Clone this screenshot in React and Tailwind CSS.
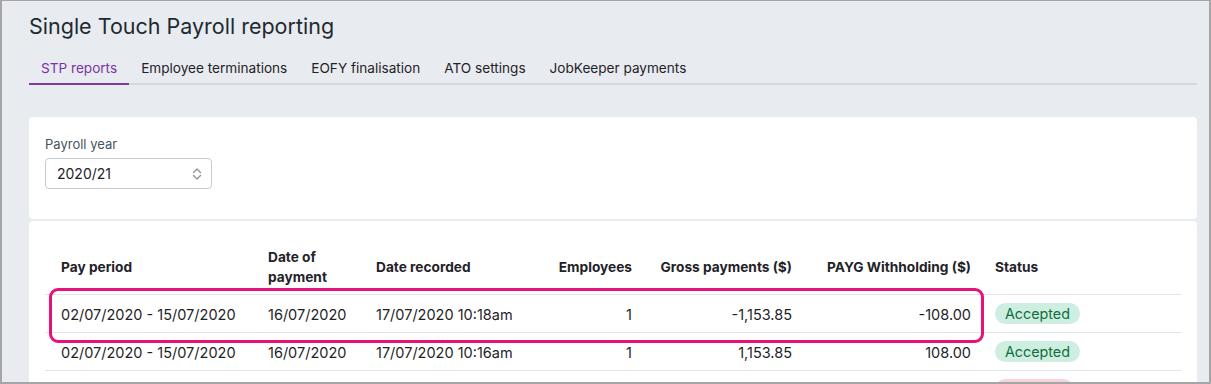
import React from "react";

const rows = [
  {
    period: "02/07/2020 - 15/07/2020",
    paid: "16/07/2020",
    recorded: "17/07/2020 10:18am",
    employees: "1",
    gross: "-1,153.85",
    payg: "-108.00",
    status: "Accepted",
  },
  {
    period: "02/07/2020 - 15/07/2020",
    paid: "16/07/2020",
    recorded: "17/07/2020 10:16am",
    employees: "1",
    gross: "1,153.85",
    payg: "108.00",
    status: "Accepted",
  },
  {
    period: "02/07/2020 - 15/07/2020",
    paid: "16/07/2020",
    recorded: "17/07/2020 10:12am",
    employees: "1",
    gross: "1,153.85",
    payg: "108.00",
    status: "Rejected",
  },
];

const tabs = [
  "STP reports",
  "Employee terminations",
  "EOFY finalisation",
  "ATO settings",
  "JobKeeper payments",
];

const Chevrons = () => (
  <svg width="10" height="14" viewBox="0 0 10 14" fill="none">
    <path
      d="M1.5 5.5 L5 2 L8.5 5.5"
      stroke="#8b939a"
      strokeWidth="1.3"
      strokeLinecap="round"
      strokeLinejoin="round"
    />
    <path
      d="M1.5 8.5 L5 12 L8.5 8.5"
      stroke="#8b939a"
      strokeWidth="1.3"
      strokeLinecap="round"
      strokeLinejoin="round"
    />
  </svg>
);

const Badge = ({ status }) => (
  <span
    className={`inline-block align-top -mt-[2px] -mb-px h-[21px] leading-[21px] px-[10px] rounded-full text-[14.3px] ${
      status === "Accepted"
        ? "bg-[#cdeee0] text-[#0f6e3d]"
        : "bg-[#f8d3dc] text-[#a3153b]"
    }`}
  >
    {status}
  </span>
);

const App = () => {
  return (
    <div
      className="w-[1211px] h-[384px] overflow-hidden bg-[#e8ebef] border-t border-x-2 border-b-2 border-[#a5a5a5] pt-[11px] pl-[27px] pr-[12px]"
      style={{ fontFamily: "Inter, 'Noto Sans', sans-serif" }}
    >
      {/* Heading */}
      <h1 className="text-[21.5px] leading-[28px] text-[#1e2a31] font-normal">
        Single Touch Payroll reporting
      </h1>

      {/* Tabs */}
      <div className="mt-[18px] flex border-b-2 border-[#d5d8dc]">
        {tabs.map((t, i) => (
          <div
            key={t}
            className={`px-3 pb-[5px] -mb-[2px] border-b-2 text-[13.6px] leading-[20px] ${
              i === 0
                ? "border-[#7d3aa8] text-[#7b35a6]"
                : "border-transparent text-[#1f2328]"
            }`}
          >
            {t}
          </div>
        ))}
      </div>

      {/* Payroll year card */}
      <div className="mt-[32px] bg-white rounded-[4px] pt-[17px] pb-[30px] px-4">
        <label className="block text-[13px] leading-[20px] text-[#46545e]">
          Payroll year
        </label>
        <div className="mt-[4px] w-[167px] h-[31px] border border-[#c5cbd1] rounded-[4px] flex items-center justify-between pl-[11px] pr-[9px]">
          <span className="text-[14px] text-[#1f2328]">2020/21</span>
          <Chevrons />
        </div>
      </div>

      {/* Reports table card */}
      <div className="relative mt-[2px] bg-white rounded-t-[4px] pt-[19px] px-4 h-[300px]">
        <table className="w-full table-fixed border-collapse text-[#1f2328]">
          <colgroup>
            <col className="w-[211px]" />
            <col className="w-[108px]" />
            <col className="w-[176px]" />
            <col className="w-[104px]" />
            <col className="w-[160px]" />
            <col className="w-[179px]" />
            <col className="w-[198px]" />
          </colgroup>
          <thead>
            <tr className="border-b border-[#e1e4e8] text-[13.7px] leading-[20px] font-semibold">
              <th className="text-left align-middle pl-4 pr-3 py-[7px]">
                Pay period
              </th>
              <th className="text-left align-middle px-3 py-[7px]">
                Date of payment
              </th>
              <th className="text-left align-middle px-3 py-[7px]">
                Date recorded
              </th>
              <th className="text-right align-middle px-3 py-[7px]">
                Employees
              </th>
              <th className="text-right align-middle px-3 py-[7px] whitespace-nowrap">
                Gross payments ($)
              </th>
              <th className="text-right align-middle px-3 py-[7px] whitespace-nowrap">
                PAYG Withholding ($)
              </th>
              <th className="text-left align-middle px-3 py-[7px]">Status</th>
            </tr>
          </thead>
          <tbody className="text-[14.5px] leading-[20px]">
            {rows.map((r, i) => (
              <tr key={i} className="border-b border-[#e1e4e8]">
                <td className="pl-4 pr-3 pt-[10px] pb-[7px] whitespace-nowrap">
                  {r.period}
                </td>
                <td className="px-3 pt-[10px] pb-[7px]">{r.paid}</td>
                <td className="px-3 pt-[10px] pb-[7px] whitespace-nowrap">
                  {r.recorded}
                </td>
                <td className="px-3 pt-[10px] pb-[7px] text-right">
                  {r.employees}
                </td>
                <td className="px-3 pt-[10px] pb-[7px] text-right">
                  {r.gross}
                </td>
                <td className="px-3 pt-[10px] pb-[7px] text-right">
                  {r.payg}
                </td>
                <td className="px-3 pt-[10px] pb-[7px]">
                  <Badge status={r.status} />
                </td>
              </tr>
            ))}
          </tbody>
        </table>

        {/* highlight annotation */}
        <div className="absolute left-[20px] top-[67px] w-[935px] h-[55px] border-[3px] border-[#e6117a] rounded-[9px] pointer-events-none" />
      </div>
    </div>
  );
};

export default App;
